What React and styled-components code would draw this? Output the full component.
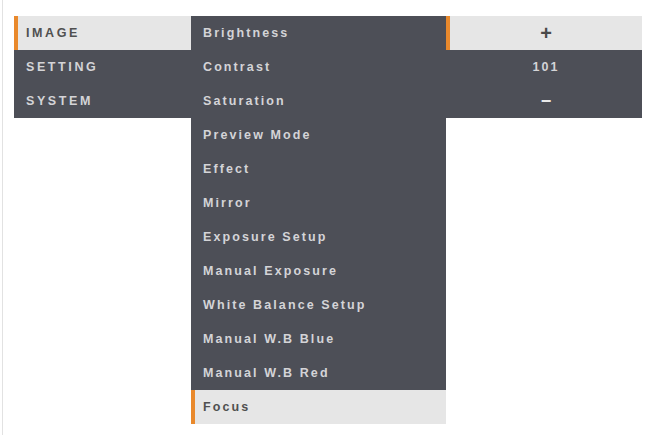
import React from "react";
import styled, { createGlobalStyle } from "styled-components";

const GlobalStyle = createGlobalStyle`
  html, body {
    margin: 0;
    padding: 0;
    background: #fff;
  }
  body {
    font-family: "Liberation Sans", Arial, sans-serif;
  }
`;

const Screen = styled.div`
  width: 648px;
  height: 435px;
  box-sizing: border-box;
  border-left: 1px solid #e2e2e2;
  margin-left: 2px;
  padding: 16px 0 0 11px;
  display: flex;
  align-items: flex-start;
`;

const Column = styled.div`
  width: ${(p) => p.width}px;
  display: flex;
  flex-direction: column;
  background: #4d4f57;
`;

const Row = styled.div`
  height: 34px;
  box-sizing: border-box;
  display: flex;
  align-items: center;
  justify-content: ${(p) => (p.center ? "center" : "flex-start")};
  padding-left: ${(p) => (p.center ? 0 : 8)}px;
  font-size: 12.5px;
  font-weight: bold;
  letter-spacing: ${(p) => (p.wide ? 2.6 : 2.1)}px;
  color: ${(p) => (p.active ? "#505050" : "#d4d4d7")};
  background: ${(p) => (p.active ? "#e6e6e6" : "transparent")};
  border-left: 4px solid ${(p) => (p.active ? "#e9892c" : "transparent")};
  white-space: nowrap;
`;

const Sign = styled.span`
  font-size: ${(p) => p.size}px;
  font-weight: bold;
  line-height: 1;
  letter-spacing: 0;
  color: ${(p) => p.color};
`;

const groups = ["IMAGE", "SETTING", "SYSTEM"];

const items = [
  "Brightness",
  "Contrast",
  "Saturation",
  "Preview Mode",
  "Effect",
  "Mirror",
  "Exposure Setup",
  "Manual Exposure",
  "White Balance Setup",
  "Manual W.B Blue",
  "Manual W.B Red",
  "Focus",
];

export default function App() {
  return (
    <>
      <GlobalStyle />
      <Screen>
        <Column width={177}>
          {groups.map((g, i) => (
            <Row key={g} wide active={i === 0}>
              {g}
            </Row>
          ))}
        </Column>
        <Column width={255}>
          {items.map((item) => (
            <Row key={item} active={item === "Focus"}>
              {item}
            </Row>
          ))}
        </Column>
        <Column width={196}>
          <Row center active>
            <Sign size={20} color="#4a4a4a">+</Sign>
          </Row>
          <Row center>101</Row>
          <Row center>
            <Sign size={18} color="#eaeaea">−</Sign>
          </Row>
        </Column>
      </Screen>
    </>
  );
}
